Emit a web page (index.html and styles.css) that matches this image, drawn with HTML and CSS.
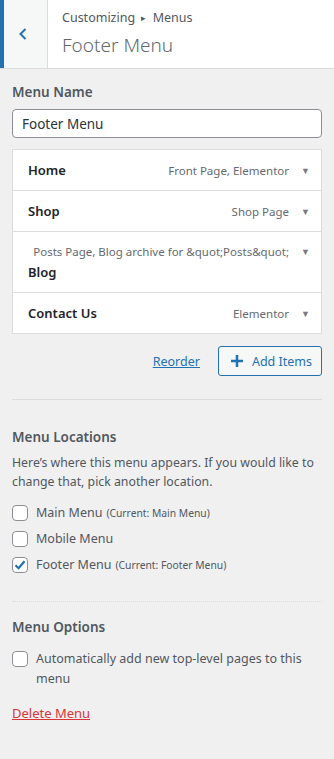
FILE: index.html
```html
<!DOCTYPE html>
<html lang="en">
<head>
  <meta charset="UTF-8" />
  <meta name="viewport" content="width=device-width, initial-scale=1.0"/>
  <title>Customizing Menus</title>
  <link rel="stylesheet" href="styles.css">
</head>
<body>
  <div class="panel">
    <div class="panel-header">
      <button class="back-btn" aria-label="Back">
        <svg width="12" height="16" viewBox="0 0 12 16"><path d="M8.5 3 L3.5 8 L8.5 13" fill="none" stroke="#2271b1" stroke-width="2"/></svg>
      </button>
      <div class="panel-title">
        <div class="crumbs">Customizing <span class="crumb-sep">&#9656;</span> Menus</div>
        <h2>Footer Menu</h2>
      </div>
    </div>

    <div class="panel-body">
      <label class="field-label">Menu Name</label>
      <input class="menu-name" type="text" value="Footer Menu">

      <ul class="menu-items">
        <li class="menu-item">
          <div class="item-main">
            <span class="item-title">Home</span>
            <span class="item-type">Front Page, Elementor</span>
          </div>
          <span class="item-arrow">&#9660;</span>
        </li>
        <li class="menu-item">
          <div class="item-main">
            <span class="item-title">Shop</span>
            <span class="item-type">Shop Page</span>
          </div>
          <span class="item-arrow">&#9660;</span>
        </li>
        <li class="menu-item tall">
          <div class="item-main wrap">
            <span class="item-type">Posts Page, Blog archive for &amp;quot;Posts&amp;quot;</span>
            <span class="item-title">Blog</span>
          </div>
          <span class="item-arrow">&#9660;</span>
        </li>
        <li class="menu-item">
          <div class="item-main">
            <span class="item-title">Contact Us</span>
            <span class="item-type">Elementor</span>
          </div>
          <span class="item-arrow">&#9660;</span>
        </li>
      </ul>

      <div class="menu-actions">
        <a href="#" class="reorder">Reorder</a>
        <button class="add-items">
          <svg width="12" height="12" viewBox="0 0 12 12"><path d="M4.75 0h2.5v4.75H12v2.5H7.25V12h-2.5V7.25H0v-2.5h4.75z" fill="#2271b1"/></svg>
          Add Items
        </button>
      </div>

      <div class="section solid">
        <h3>Menu Locations</h3>
        <p class="desc">Here’s where this menu appears. If you would like to change that, pick another location.</p>
        <label class="check"><span class="box"></span>Main Menu <small>(Current: Main Menu)</small></label>
        <label class="check"><span class="box"></span>Mobile Menu</label>
        <label class="check"><span class="box">
          <svg width="14" height="14" viewBox="0 0 14 14"><path d="M2.5 7.2 L5.6 10.2 L11.5 3.2" fill="none" stroke="#2271b1" stroke-width="2.2"/></svg>
        </span>Footer Menu <small>(Current: Footer Menu)</small></label>
      </div>

      <div class="section dotted">
        <h3>Menu Options</h3>
        <label class="check multi"><span class="box"></span><span>Automatically add new top-level pages to this menu</span></label>
      </div>

      <a href="#" class="delete-menu">Delete Menu</a>
    </div>
  </div>
</body>
</html>
```

FILE: styles.css
```css
body {
  margin: 0;
  padding: 0;
  font-family: "Noto Sans", "Open Sans", sans-serif;
  background-color: #f0f0f1;
  color: #3c434a;
}
.panel {
  width: 334px;
  min-height: 759px;
}
.panel-header {
  display: flex;
  height: 68px;
  background-color: #fff;
  border-bottom: 1px solid #dcdcde;
}
.back-btn {
  width: 48px;
  flex-shrink: 0;
  background-color: #f6f7f7;
  border: none;
  border-left: 4px solid #2271b1;
  border-right: 1px solid #dcdcde;
  padding: 0 6px 0 0;
  display: flex;
  align-items: center;
  justify-content: center;
}
.panel-title {
  padding: 9px 0 0 14px;
}
.crumbs {
  font-size: 12.5px;
  color: #50575e;
  line-height: 18px;
}
.crumb-sep {
  font-size: 9px;
  margin: 0 3px;
  position: relative;
  top: -1px;
}
.panel-title h2 {
  margin: 4px 0 0;
  font-size: 19px;
  font-weight: 300;
  color: #646970;
  line-height: 26px;
}
.panel-body {
  padding: 12px 12px 40px;
}
.field-label {
  display: block;
  font-size: 13.5px;
  font-weight: 600;
  color: #50575e;
  line-height: 20px;
  margin: 1px 0 7px;
}
.menu-name {
  box-sizing: border-box;
  width: 100%;
  height: 29px;
  border: 1px solid #8c8f94;
  border-radius: 4px;
  padding: 0 9px;
  font-family: inherit;
  font-size: 13.5px;
  color: #2c3338;
  background: #fff;
}
.menu-items {
  list-style: none;
  margin: 11px 0 0;
  padding: 0;
  border: 1px solid #dcdcde;
  border-bottom: none;
  background: #fff;
}
.menu-item {
  display: flex;
  align-items: center;
  height: 40px;
  padding: 0 12px 0 15px;
  border-bottom: 1px solid #dcdcde;
}
.menu-item.tall {
  height: 60px;
  align-items: flex-start;
}
.item-main {
  flex-grow: 1;
  display: flex;
  align-items: center;
}
.item-main.wrap {
  flex-wrap: wrap;
  justify-content: flex-end;
  padding-top: 10px;
}
.item-main.wrap .item-type {
  line-height: 20px;
}
.item-main.wrap .item-title {
  width: 100%;
  line-height: 20px;
}
.menu-item.tall .item-arrow {
  padding-top: 13px;
}
.item-title {
  font-size: 13px;
  font-weight: 600;
  color: #1d2327;
  flex-grow: 1;
}
.item-type {
  font-size: 11.5px;
  color: #646970;
}
.item-arrow {
  font-size: 9px;
  color: #787c82;
  margin-left: 12px;
  width: 8px;
}
.menu-actions {
  display: flex;
  justify-content: flex-end;
  align-items: center;
  margin-top: 12px;
}
.reorder {
  font-size: 12.5px;
  color: #2271b1;
  margin-right: 18px;
}
.add-items {
  display: flex;
  align-items: center;
  gap: 9px;
  height: 30px;
  padding: 0 9px 0 12px;
  border: 1px solid #2271b1;
  border-radius: 3px;
  background: #f6f7f7;
  color: #2271b1;
  font-family: inherit;
  font-size: 12.5px;
}
.section {
  margin-top: 23px;
  padding-top: 27px;
}
.section.solid {
  border-top: 1px solid #dcdcde;
}
.section.dotted {
  margin-top: 26px;
  border-top: 1px dotted #dcdcde;
  padding-top: 15px;
}
.section h3 {
  margin: 0 0 6px;
  font-size: 13.5px;
  font-weight: 600;
  color: #50575e;
  line-height: 20px;
}
.desc {
  margin: 0 0 12px;
  font-size: 12.3px;
  line-height: 19px;
  color: #50575e;
}
.check {
  display: flex;
  align-items: center;
  font-size: 12.5px;
  color: #50575e;
  line-height: 20px;
  margin-bottom: 6px;
}
.check small {
  font-size: 10.3px;
  margin-left: 4px;
}
.check.multi {
  align-items: flex-start;
  margin-top: 12px;
}
.box {
  box-sizing: border-box;
  width: 16px;
  height: 16px;
  flex-shrink: 0;
  border: 1px solid #8c8f94;
  border-radius: 4px;
  background: #fff;
  margin-right: 8px;
  display: flex;
  align-items: center;
  justify-content: center;
}
.check.multi .box {
  margin-top: 2px;
}
.delete-menu {
  display: inline-block;
  margin-top: 9px;
  font-size: 13px;
  color: #d63638;
}
```
